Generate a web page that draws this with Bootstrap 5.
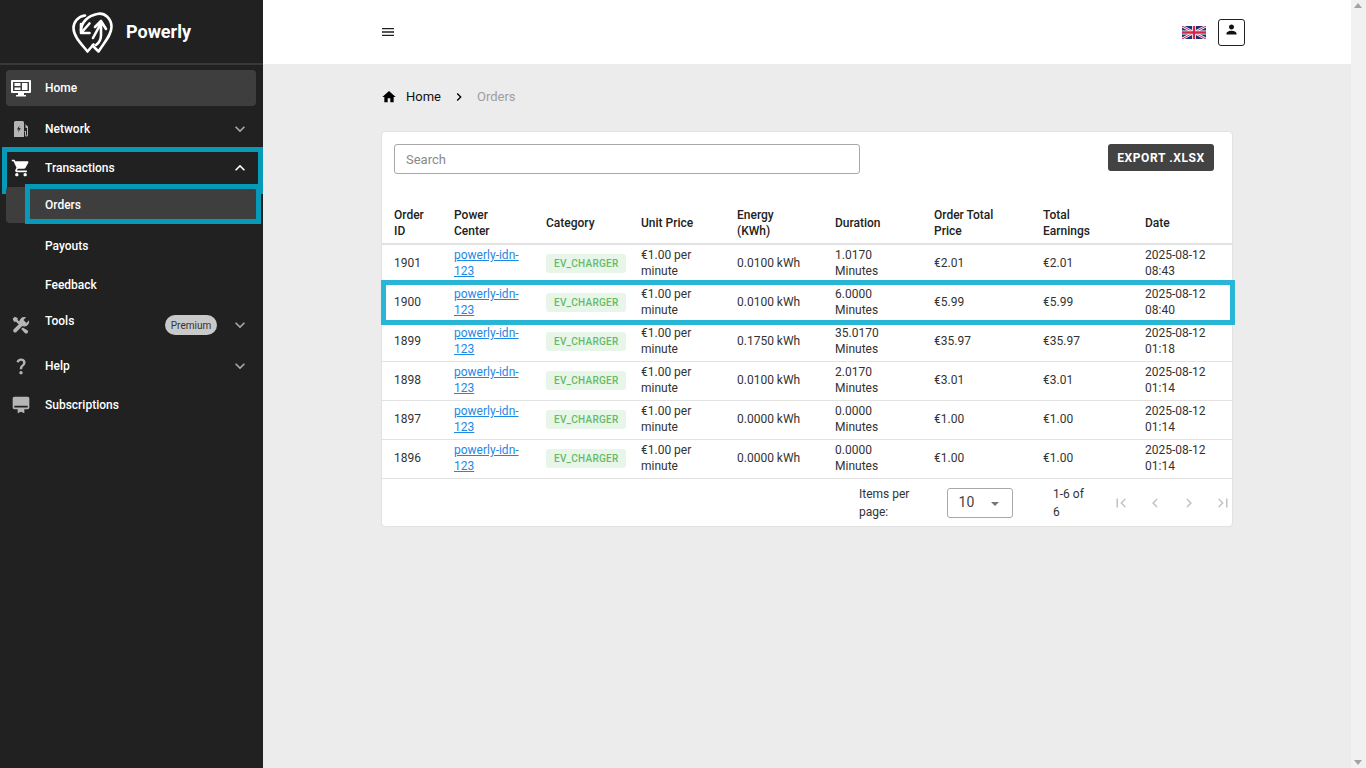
<!DOCTYPE html>
<html lang="en">
<head>
<meta charset="utf-8">
<title>Powerly Orders</title>
<link href="https://cdn.jsdelivr.net/npm/bootstrap@5.3.0/dist/css/bootstrap.min.css" rel="stylesheet">
<style>
html,body{height:768px;overflow:hidden}
body{font-family:Roboto,"Liberation Sans",sans-serif;font-size:12px;background:#ececec;color:#212121}
.shell{height:768px}
.side{width:263px;flex:none;background:#212121;color:#fff}
.side-head{height:65px;border-bottom:2px solid #383838;padding-left:72px;gap:13px}
.brand{font-size:18px;font-weight:700;color:#fff}
.side-list{padding:5px 7px 0 6px}
.side-item{height:39px;font-weight:500;color:#fff;padding-left:39px;position:relative;border-radius:4px}
.side-item.on{background:#3e3e3e;height:36px;margin:0 0 3px}
.side-item .ico{position:absolute;left:5px;top:50%;transform:translateY(-50%);width:20px;height:20px;fill:#b5b5b5}
.side-item .ico.lit{fill:#fff}
.side-item .chev{position:absolute;left:224px;top:50%;transform:translateY(-50%);width:20px;height:20px;fill:#a8a8a8}
.side-item .chev.lit{fill:#fff}
.tall{height:42px}
.tools-label{position:relative;top:-4px}
.prem{position:absolute;left:159px;top:11px;height:20px;width:52px;border-radius:10px;background:#c9c9c9;color:#333;font-size:10px;font-weight:400;display:flex;align-items:center;justify-content:center}
.mark-teal{position:absolute;border:5px solid #079ab8;pointer-events:none}
.mark-tx{left:-4px;top:-1px;width:261px;height:47px}
.mark-or{left:19px;top:-3px;width:236px;height:40px}
.mark-row{left:-1px;top:37px;width:854px;height:45px;border-color:#29b5d5}
.body-col{min-width:0}
.topbar{height:64px;background:#fff;padding-left:117px;padding-right:106px;flex:none}
.burger{width:16px;height:16px;fill:#212121}
.flag{width:24px;height:13px;margin-right:12px}
.user-btn{width:27px;height:27px;border:1px solid #212121;border-radius:3px;padding:0;background:#fff}
.user-btn svg{width:15px;height:15px;margin-top:-6px;fill:#111}
.page{padding:24px 118px 0 118px}
.crumbs{height:17px;margin-bottom:26px;font-size:13px;padding-left:-1px}
.crumbs svg{fill:#000}
.crumb-home{color:#111;margin-left:9px;text-decoration:none}
.crumb-now{color:#9e9e9e}
.panel{border:1px solid #e2e2e2;border-radius:4px;background:#fff;height:396px}
.tool-row{padding:12px 18px 0 12px;height:70px}
.search{width:466px;height:30px;font-size:13px;border:1px solid #a8a8a8;border-radius:3px;padding:0 11px;color:#333}
.search::placeholder{color:#8a8a8a}
.export{width:106px;height:27px;background:#434343;color:#fff;font-size:12px;font-weight:700;letter-spacing:.6px;border:0;border-radius:3px;padding:0}
.export:hover{background:#434343;color:#fff}
.tbl-wrap{position:relative}
.orders{table-layout:fixed;width:850px;margin:0;font-size:12px;--bs-table-color:#333}
.orders th,.orders td{padding:0 12px;vertical-align:middle;border-bottom:1px solid #e2e2e2;line-height:15.5px;font-weight:400}
.orders th{height:42px;color:#222;font-weight:500;line-height:16px;border-bottom-width:2px}
.orders td{height:39px;color:#333}
.orders a{color:#1e88e5}
.cat{display:inline-block;background:#e8f5e9;color:#66bb6a;font-size:10px;font-weight:500;border-radius:3px;padding:0 8px;height:19px;line-height:20px;letter-spacing:.25px;margin-left:0;white-space:nowrap}
.orders td:nth-child(3){padding-right:0}
.foot{height:48px;padding-left:477px;color:#333}
.per{width:67px;height:30px;border:1px solid #a8a8a8;border-radius:3px;margin-left:6px;margin-right:40px;padding:0 11px;font-size:14px;color:#444;position:relative}
.per i{position:absolute;right:13px;top:13px;border:4px solid transparent;border-top:4px solid #757575;border-bottom:0}
.pg{fill:#c2c2c2;width:18px;height:18px;flex:none}
.pgs{margin-left:19px;gap:16px}
.fake-bar{width:15px;flex:none;background:#f1f1f1;position:relative}
.fake-bar b{position:absolute;left:3px;border:4.5px solid transparent}
.fake-bar .up{top:3px;border-top:0;border-bottom:5px solid #a3a3a3}
.fake-bar .dn{bottom:3px;border-bottom:0;border-top:5px solid #a3a3a3}
</style>
</head>
<body>
<div class="shell d-flex">
  <aside class="side d-flex flex-column">
    <div class="side-head d-flex align-items-center">
      <svg width="41" height="43" viewBox="0 0 41 43" fill="none" stroke="#fff" stroke-width="2.6" stroke-linecap="round" stroke-linejoin="round">
        <path d="M13 5.5C6 6.5 1.5 12 1.5 18c0 8 7 15 14 23.5l6-7"/>
        <path d="M9 20c.5-8 7-14 16-16 8-2 14.500 5 14.500 13 0 8-7 15-13 24.500l-6-6"/>
        <path d="M9 14v9h8.500M9.500 22.500l8-9"/>
        <path d="M21 28 28 15M23 17l6-6 5 8M29 11v14c0 5-2 8-5 10"/>
      </svg>
      <span class="brand">Powerly</span>
    </div>
    <nav class="side-list flex-grow-1 d-flex flex-column">
      <div class="side-item on d-flex align-items-center">
        <svg class="ico lit" viewBox="0 0 20 20"><path d="M1 2h18a1 1 0 0 1 1 1v11a1 1 0 0 1-1 1h-6v2h2v1.500H5V17h2v-2H1a1 1 0 0 1-1-1V3a1 1 0 0 1 1-1zm1 2v9h16V4zm1.500 1h6v3h-6zm7.500 0h5.500v7H11zM3.500 9.500h6V12h-6z"/></svg>
        Home
      </div>
      <div class="side-item d-flex align-items-center">
        <svg class="ico" viewBox="0 0 20 20"><path d="M3 3.500A1.500 1.500 0 0 1 4.500 2h7A1.500 1.500 0 0 1 13 3.500V18H3zm5.500 3L6 10.500h1.800l-.8 3 2.800-4.200H8zM14 5l3 2.500V16a1.500 1.500 0 0 1-3 0v-3h-.500v-1h1.500v4a.5.500 0 0 0 1 0V9h-1.500V6.500z"/></svg>
        Network
        <svg class="chev" viewBox="0 0 24 24"><path d="M16.590 8.590 12 13.170 7.410 8.590 6 10l6 6 6-6z"/></svg>
      </div>
      <div class="side-item d-flex align-items-center">
        <svg class="ico lit" viewBox="0 0 24 24"><path d="M7 18c-1.100 0-1.990.9-1.990 2S5.900 22 7 22s2-.9 2-2-.9-2-2-2zM1 2v2h2l3.600 7.590-1.350 2.450c-.16.28-.25.61-.25.96 0 1.100.9 2 2 2h12v-2H7.420c-.14 0-.25-.11-.25-.25l.03-.12.9-1.630h7.450c.75 0 1.410-.41 1.750-1.030l3.580-6.490c.08-.14.12-.31.12-.48 0-.55-.45-1-1-1H5.210l-.94-2H1zm16 16c-1.100 0-1.990.9-1.990 2s.89 2 1.990 2 2-.9 2-2-.9-2-2-2z"/></svg>
        Transactions
        <svg class="chev lit" viewBox="0 0 24 24"><path d="M12 8l-6 6 1.410 1.410L12 10.830l4.590 4.580L18 14z"/></svg>
        <span class="mark-teal mark-tx"></span>
      </div>
      <div class="side-item on d-flex align-items-center">
        Orders
        <span class="mark-teal mark-or"></span>
      </div>
      <div class="side-item d-flex align-items-center">Payouts</div>
      <div class="side-item d-flex align-items-center">Feedback</div>
      <div class="side-item tall d-flex align-items-center">
        <svg class="ico" viewBox="0 0 24 24"><path d="M21.700 6.300 18.500 9.500 15 6l3.200-3.200a6 6 0 0 0-7.900 7.300L3 17.400a2.300 2.300 0 0 0 3.200 3.200l7.300-7.300a6 6 0 0 0 8.200-7zM4.500 2 2 4.500 3.500 8H6l3.500 3.500 2-2L8 6V3.500z"/><path d="M14 15l-1.800 1.800 4.700 5a2.300 2.300 0 0 0 3.200-3.200z"/></svg>
        <span class="tools-label">Tools</span>
        <span class="prem">Premium</span>
        <svg class="chev" viewBox="0 0 24 24"><path d="M16.590 8.590 12 13.170 7.410 8.590 6 10l6 6 6-6z"/></svg>
      </div>
      <div class="side-item d-flex align-items-center">
        <svg class="ico" viewBox="0 0 24 24"><path d="M11.070 12.850c.77-1.390 2.250-2.210 3.110-3.440.91-1.290.4-3.700-2.180-3.700-1.690 0-2.520 1.280-2.870 2.340L6.540 6.960C7.250 4.830 9.180 3 11.990 3c2.350 0 3.960 1.070 4.780 2.410.7 1.150 1.110 3.300.03 4.900-1.200 1.770-2.350 2.310-2.970 3.450-.25.46-.35.76-.35 2.240h-2.890c-.01-.78-.13-2.050.48-3.150zM14 20c0 1.100-.9 2-2 2s-2-.9-2-2 .9-2 2-2 2 .9 2 2z"/></svg>
        Help
        <svg class="chev" viewBox="0 0 24 24"><path d="M16.590 8.590 12 13.170 7.410 8.590 6 10l6 6 6-6z"/></svg>
      </div>
      <div class="side-item d-flex align-items-center">
        <svg class="ico" viewBox="0 0 24 24"><path d="M4 2h16a2 2 0 0 1 2 2v11a2 2 0 0 1-2 2h-4v5l-4-2-4 2v-5H4a2 2 0 0 1-2-2V4a2 2 0 0 1 2-2zm0 11v2h16v-2z"/></svg>
        Subscriptions
      </div>
    </nav>
  </aside>

  <div class="body-col flex-grow-1 d-flex flex-column">
    <header class="topbar d-flex align-items-center justify-content-between">
      <svg class="burger" viewBox="0 0 24 24"><path d="M3 18h18v-2H3v2zm0-5h18v-2H3v2zm0-7v2h18V6H3z"/></svg>
      <div class="d-flex align-items-center">
        <svg class="flag" viewBox="0 0 60 32" preserveAspectRatio="none">
          <rect width="60" height="32" fill="#1f2f78"/>
          <path d="M0 0 60 32M60 0 0 32" stroke="#fff" stroke-width="6"/>
          <path d="M0 0 60 32M60 0 0 32" stroke="#d3274a" stroke-width="2.500"/>
          <path d="M30 0v32M0 16h60" stroke="#fff" stroke-width="10"/>
          <path d="M30 0v32M0 16h60" stroke="#d3274a" stroke-width="6"/>
        </svg>
        <button class="btn user-btn" type="button" aria-label="Account">
          <svg viewBox="0 0 24 24"><path d="M12 12c2.210 0 4-1.790 4-4s-1.790-4-4-4-4 1.790-4 4 1.790 4 4 4zm0 2c-2.670 0-8 1.340-8 4v2h16v-2c0-2.660-5.330-4-8-4z"/></svg>
        </button>
      </div>
    </header>
    <main class="page flex-grow-1">
      <div class="crumbs d-flex align-items-center">
        <svg width="16" height="16" viewBox="0 0 24 24"><path d="M10 20v-6h4v6h5v-8h3L12 3 2 12h3v8z"/></svg>
        <a class="crumb-home" href="#">Home</a>
        <svg class="mx-2" width="20" height="16" viewBox="0 0 24 24"><path d="M10 6 8.590 7.410 13.170 12l-4.580 4.590L10 18l6-6z"/></svg>
        <span class="crumb-now">Orders</span>
      </div>
      <section class="panel">
        <div class="tool-row d-flex justify-content-between align-items-start">
          <input class="form-control search" type="text" placeholder="Search">
          <button class="btn export" type="button">EXPORT .XLSX</button>
        </div>
        <div class="tbl-wrap">
          <table class="table orders">
            <colgroup><col style="width:60px"><col style="width:92px"><col style="width:95px"><col style="width:96px"><col style="width:98px"><col style="width:99px"><col style="width:109px"><col style="width:102px"><col style="width:99px"></colgroup>
            <thead><tr><th>Order ID</th><th>Power Center</th><th>Category</th><th>Unit Price</th><th>Energy<br>(KWh)</th><th>Duration</th><th>Order Total<br>Price</th><th>Total<br>Earnings</th><th>Date</th></tr></thead>
            <tbody>
              <tr><td>1901</td><td><a href="#">powerly-idn-123</a></td><td><span class="cat">EV_CHARGER</span></td><td>€1.00 per minute</td><td>0.0100 kWh</td><td>1.0170 Minutes</td><td>€2.01</td><td>€2.01</td><td>2025-08-12 08:43</td></tr>
              <tr><td>1900</td><td><a href="#">powerly-idn-123</a></td><td><span class="cat">EV_CHARGER</span></td><td>€1.00 per minute</td><td>0.0100 kWh</td><td>6.0000 Minutes</td><td>€5.99</td><td>€5.99</td><td>2025-08-12 08:40</td></tr>
              <tr><td>1899</td><td><a href="#">powerly-idn-123</a></td><td><span class="cat">EV_CHARGER</span></td><td>€1.00 per minute</td><td>0.1750 kWh</td><td>35.0170 Minutes</td><td>€35.97</td><td>€35.97</td><td>2025-08-12 01:18</td></tr>
              <tr><td>1898</td><td><a href="#">powerly-idn-123</a></td><td><span class="cat">EV_CHARGER</span></td><td>€1.00 per minute</td><td>0.0100 kWh</td><td>2.0170 Minutes</td><td>€3.01</td><td>€3.01</td><td>2025-08-12 01:14</td></tr>
              <tr><td>1897</td><td><a href="#">powerly-idn-123</a></td><td><span class="cat">EV_CHARGER</span></td><td>€1.00 per minute</td><td>0.0000 kWh</td><td>0.0000 Minutes</td><td>€1.00</td><td>€1.00</td><td>2025-08-12 01:14</td></tr>
              <tr><td>1896</td><td><a href="#">powerly-idn-123</a></td><td><span class="cat">EV_CHARGER</span></td><td>€1.00 per minute</td><td>0.0000 kWh</td><td>0.0000 Minutes</td><td>€1.00</td><td>€1.00</td><td>2025-08-12 01:14</td></tr>
            </tbody>
          </table>
          <span class="mark-teal mark-row" style="top:78px"></span>
        </div>
        <div class="foot d-flex align-items-center">
          <span>Items per page:</span>
          <div class="per d-flex align-items-center">10<i></i></div>
          <span>1-6 of 6</span>
          <div class="pgs d-flex align-items-center">
            <svg class="pg" viewBox="0 0 24 24"><path d="M18.410 16.590 13.820 12l4.590-4.590L17 6l-6 6 6 6zM6 6h2v12H6z"/></svg>
            <svg class="pg" viewBox="0 0 24 24"><path d="M15.410 7.410 14 6l-6 6 6 6 1.410-1.410L10.830 12z"/></svg>
            <svg class="pg" viewBox="0 0 24 24"><path d="M10 6 8.590 7.410 13.170 12l-4.580 4.590L10 18l6-6z"/></svg>
            <svg class="pg" viewBox="0 0 24 24"><path d="M5.590 7.410 10.180 12l-4.590 4.590L7 18l6-6-6-6zM16 6h2v12h-2z"/></svg>
          </div>
        </div>
      </section>
    </main>
  </div>
  <div class="fake-bar"><b class="up"></b><b class="dn"></b></div>
</div>
<script src="https://cdn.jsdelivr.net/npm/bootstrap@5.3.0/dist/js/bootstrap.bundle.min.js"></script>
</body>
</html>
